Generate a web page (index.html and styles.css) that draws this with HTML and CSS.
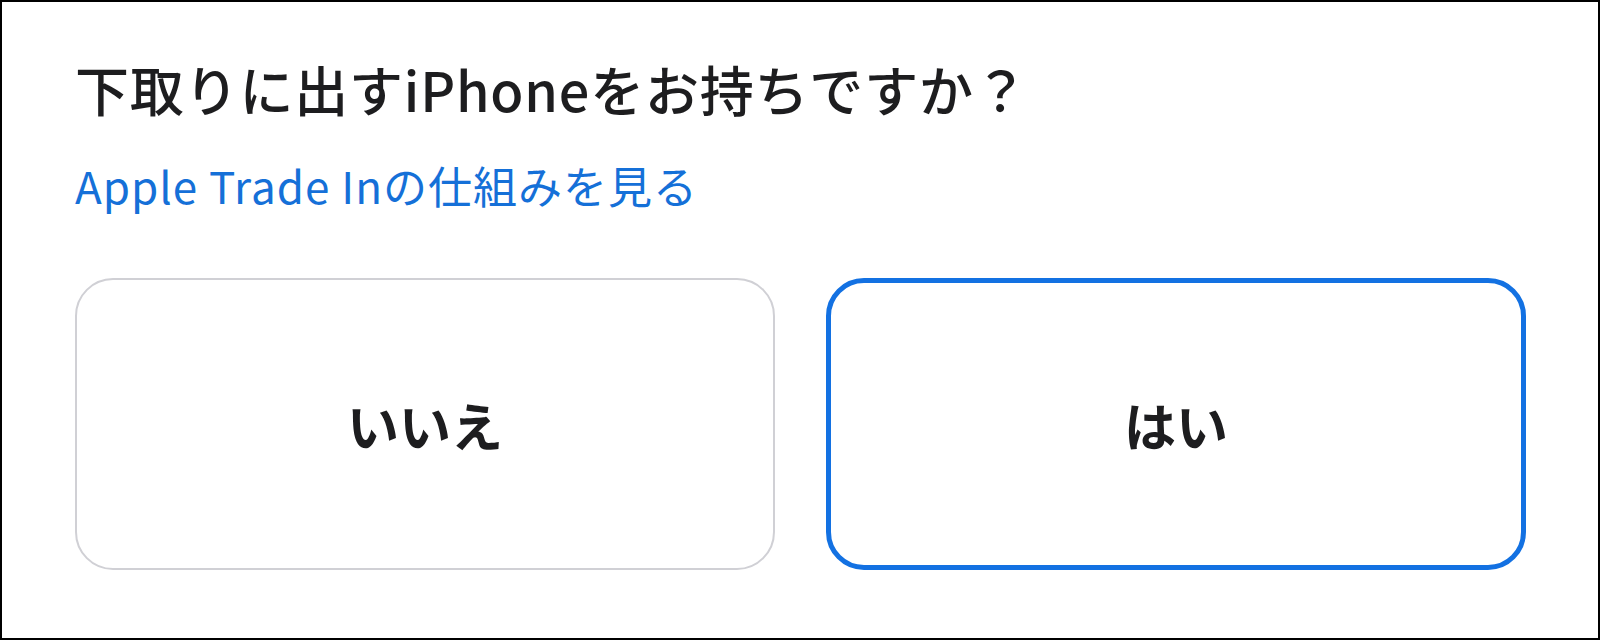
FILE: index.html
```html
<!DOCTYPE html>
<html lang="ja">
<head>
<meta charset="utf-8">
<title>下取り</title>
<link rel="stylesheet" href="styles.css">
</head>
<body>
<div class="frame">
  <h2 class="title">下取りに出すiPhoneをお持ちですか？</h2>
  <a class="link" href="#">Apple Trade Inの仕組みを見る</a>
  <div class="choices">
    <button class="choice">いいえ</button>
    <button class="choice selected">はい</button>
  </div>
</div>
</body>
</html>
```

FILE: styles.css
```css
html, body {
  margin: 0;
  padding: 0;
  background: #fff;
}
.frame {
  box-sizing: border-box;
  width: 1600px;
  height: 640px;
  border: 2px solid #000;
  padding: 54px 72px 0 73px;
  display: flex;
  flex-direction: column;
  font-family: "Noto Sans CJK JP", "Noto Sans", sans-serif;
  color: #1d1d1f;
}
.title {
  margin: 0;
  font-size: 54px;
  line-height: 65px;
  font-weight: 500;
  letter-spacing: 0.8px;
}
.link {
  margin-top: 38px;
  font-size: 44px;
  line-height: 53px;
  letter-spacing: 1px;
  color: #1570d8;
  text-decoration: none;
  align-self: flex-start;
}
.choices {
  margin-top: 66px;
  display: grid;
  grid-template-columns: 700px 700px;
  column-gap: 51px;
}
.choice {
  box-sizing: border-box;
  height: 292px;
  border: 2px solid #d0d0d5;
  border-radius: 38px;
  background: #fff;
  font-family: inherit;
  font-size: 52px;
  font-weight: 700;
  color: #1d1d1f;
  padding: 0;
}
.choice.selected {
  border: 5px solid #1371e2;
}
```
